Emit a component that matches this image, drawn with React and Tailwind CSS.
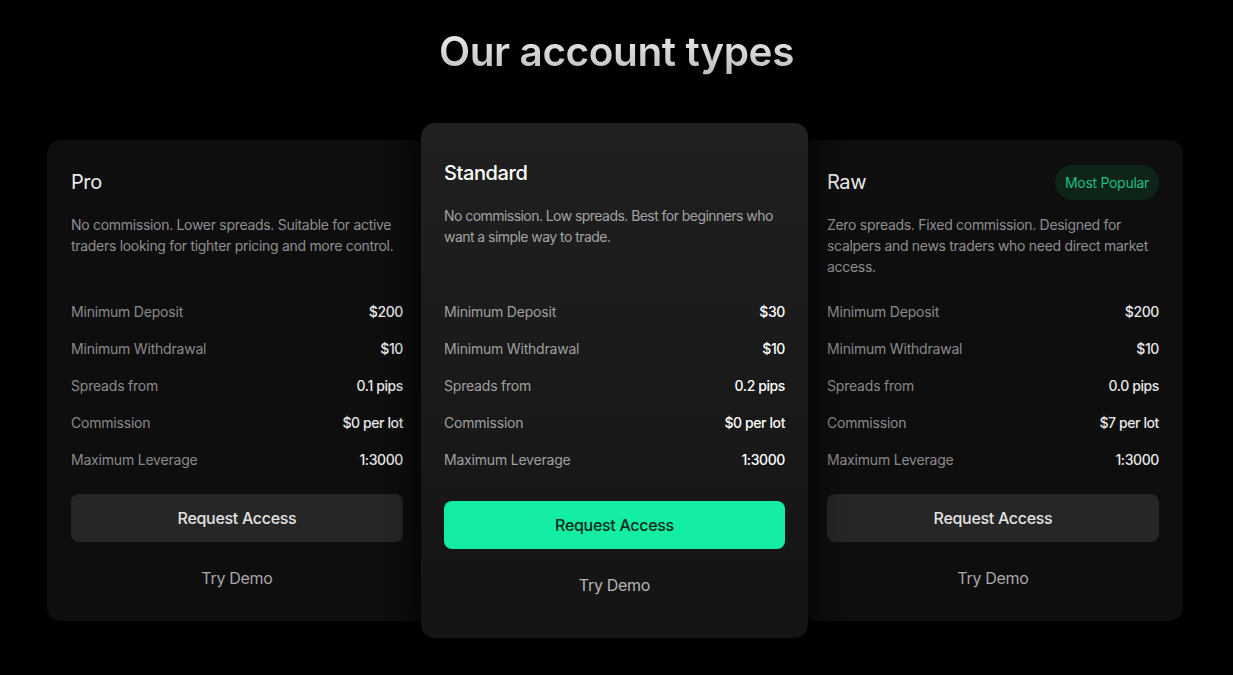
const cards = [
  {
    name: 'Pro',
    desc: 'No commission. Lower spreads. Suitable for active traders looking for tighter pricing and more control.',
    rows: [
      ['Minimum Deposit', '$200'],
      ['Minimum Withdrawal', '$10'],
      ['Spreads from', '0.1 pips'],
      ['Commission', '$0 per lot'],
      ['Maximum Leverage', '1:3000'],
    ],
  },
  {
    name: 'Standard',
    featured: true,
    desc: 'No commission. Low spreads. Best for beginners who want a simple way to trade.',
    rows: [
      ['Minimum Deposit', '$30'],
      ['Minimum Withdrawal', '$10'],
      ['Spreads from', '0.2 pips'],
      ['Commission', '$0 per lot'],
      ['Maximum Leverage', '1:3000'],
    ],
  },
  {
    name: 'Raw',
    badge: 'Most Popular',
    desc: 'Zero spreads. Fixed commission. Designed for scalpers and news traders who need direct market access.',
    rows: [
      ['Minimum Deposit', '$200'],
      ['Minimum Withdrawal', '$10'],
      ['Spreads from', '0.0 pips'],
      ['Commission', '$7 per lot'],
      ['Maximum Leverage', '1:3000'],
    ],
  },
];

function Card({ card, className }) {
  const featured = card.featured;
  return (
    <div
      className={`${className} flex flex-col rounded-[14px] ${
        featured
          ? 'relative z-10 w-[387px] h-[515px] px-[23px] pt-[36px] pb-[28px] bg-gradient-to-b from-[#202020] to-[#141414] shadow-[0_0_24px_8px_rgba(0,0,0,0.75)]'
          : 'w-[380px] h-[481px] px-[24px] pt-[28px] pb-[19px] bg-[#0e0e0f]'
      }`}
    >
      <div className="flex items-center justify-between h-[28px]">
        <h3
          className={`text-[20px] leading-[28px] tracking-[-0.4px] ${
            featured ? 'text-white font-medium' : 'text-[#eaeaea]'
          }`}
        >
          {card.name}
        </h3>
        {card.badge && (
          <span className="rounded-full bg-[#0f2419] px-[10px] h-[35px] flex items-center text-[14px] tracking-[-0.3px] text-[#1dbf7f]">
            {card.badge}
          </span>
        )}
      </div>
      <p
        className={`mt-[18px] text-[14px] leading-[21px] ${
          featured ? 'h-[88px] text-[#a3a3a3] tracking-[-0.55px]' : 'h-[79px] text-[#8f8f8f] tracking-[-0.3px]'
        }`}
      >
        {card.desc}
      </p>
      <div className="flex flex-col">
        {card.rows.map(([label, value]) => (
          <div key={label} className="flex items-center justify-between h-[37px] text-[14px] tracking-[-0.2px]">
            <span className={featured ? 'text-[#a0a0a0]' : 'text-[#8a8a8a]'}>{label}</span>
            <span className={`font-medium tracking-[-0.4px] ${featured ? 'text-white' : 'text-[#e6e6e6]'}`}>
              {value}
            </span>
          </div>
        ))}
      </div>
      <button
        className={`h-[48px] rounded-[8px] text-[16px] font-medium tracking-[-0.3px] ${
          featured ? 'mt-[23px] bg-[#13eea3] text-[#0d2a1f]' : 'mt-[16px] bg-[#262626] text-[#e2e2e2]'
        }`}
      >
        Request Access
      </button>
      <button
        className={`mt-[12px] h-[48px] text-[16px] tracking-[-0.3px] ${
          featured ? 'text-[#b5b5b5]' : 'text-[#a8a8a8]'
        }`}
      >
        Try Demo
      </button>
    </div>
  );
}

export default function App() {
  return (
    <div
      className="min-h-[675px] w-full bg-black pt-[26px]"
      style={{ fontFamily: 'Inter, "Noto Sans", sans-serif' }}
    >
      <h1 className="text-center text-[40.5px] leading-[52px] font-semibold tracking-[-0.4px] bg-gradient-to-b from-[#f4f4f4] to-[#b8b8b8] bg-clip-text text-transparent">
        Our account types
      </h1>
      <div className="mt-[45px] flex items-center justify-center pr-[3px]">
        <Card card={cards[0]} className="mr-[-6px]" />
        <Card card={cards[1]} className="" />
        <Card card={cards[2]} className="ml-[-5px]" />
      </div>
    </div>
  );
}
